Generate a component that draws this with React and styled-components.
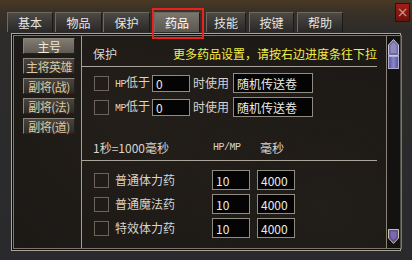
import styled, { createGlobalStyle } from "styled-components";

const Global = createGlobalStyle`
  body {
    margin: 0;
    background: #000;
  }
`;

const cjk = `"Noto Sans CJK SC", "Noto Sans", sans-serif`;

const tabs = [
  { label: "基本", w: 46, gap: 0 },
  { label: "物品", w: 47, gap: 2 },
  { label: "保护", w: 47, gap: 1 },
  { label: "药品", w: 46, gap: 4, active: true },
  { label: "技能", w: 40, gap: 6 },
  { label: "按键", w: 45, gap: 3 },
  { label: "帮助", w: 46, gap: 3 },
];

const heroes = ["主号", "主将英雄", "副将(战)", "副将(法)", "副将(道)"];

const potions = ["普通体力药", "普通魔法药", "特效体力药"];

const App = () => {
  return (
    <>
      <Global />
      <Window>
        <TabBar>
          {tabs.map((t) => (
            <Tab key={t.label} $w={t.w} $gap={t.gap} $active={t.active}>
              {t.label}
            </Tab>
          ))}
        </TabBar>
        <Close>×</Close>
        <Panel>
          <Inner>
            <Sidebar>
              {heroes.map((h, i) => (
                <SideBtn key={h} $active={i === 0}>
                  {h}
                </SideBtn>
              ))}
            </Sidebar>
            <Content>
              <Header>
                <Label $w={80}>保护</Label>
                <Hint>更多药品设置，请按右边进度条往下拉</Hint>
              </Header>
              <Section $top={6}>
                {["HP", "MP"].map((k) => (
                  <Row key={k}>
                    <Check />
                    <Label $w={37}>
                      <Latin>{k}</Latin>低于
                    </Label>
                    <Input $w={38} $h={17}>0</Input>
                    <Label $w={40} $pad={3}>时使用</Label>
                    <Input $w={80} $h={20}>随机传送卷</Input>
                  </Row>
                ))}
              </Section>
              <SubHeader>
                <Label $w={120}>1秒=1000毫秒</Label>
                <Latin $w={47}>HP/MP</Latin>
                <Label>毫秒</Label>
              </SubHeader>
              <Section $top={9}>
                {potions.map((p) => (
                  <Row key={p}>
                    <Check />
                    <Label $w={97}>{p}</Label>
                    <Input $w={38} $h={20}>10</Input>
                    <Input $w={38} $h={20} $gap={7}>4000</Input>
                  </Row>
                ))}
              </Section>
            </Content>
            <Scroll>
              <svg width="11" height="17" viewBox="0 0 11 17">
                <path d="M5.5 0.5 L10.5 6 L10.5 16.5 L0.5 16.5 L0.5 6 Z" fill="#6e6a9a" stroke="#c8c4e0" />
                <path d="M5.5 3 L8.5 6.5 L8.5 14 L2.5 14 L2.5 6.5 Z" fill="#8e8ac0" />
              </svg>
              <Thumb />
              <Spacer />
              <svg width="11" height="15" viewBox="0 0 11 15">
                <path d="M0.5 0.5 L10.5 0.5 L10.5 9 L5.5 14.5 L0.5 9 Z" fill="#5e4e8e" stroke="#c8c0a8" />
                <path d="M2.5 2.5 L8.5 2.5 L8.5 8 L5.5 11 L2.5 8 Z" fill="#7a68b0" />
              </svg>
            </Scroll>
          </Inner>
        </Panel>
      </Window>
    </>
  );
};

const Window = styled.div`
  position: relative;
  width: 412px;
  height: 260px;
  box-sizing: border-box;
  padding: 0 11px 9px 11px;
  display: flex;
  flex-direction: column;
  background:
    linear-gradient(180deg, #4a3a24 0px, #3c3226 9px, #2e2c2a 30px, #2a2a2e 100%);
  font-family: ${cjk};
  color: #d8d4cc;
`;

const TabBar = styled.div`
  height: 33px;
  margin-left: -4px;
  padding-bottom: 1px;
  box-sizing: border-box;
  display: flex;
  align-items: flex-end;
`;

const Tab = styled.div`
  position: relative;
  width: ${(p) => p.$w}px;
  margin-left: ${(p) => p.$gap}px;
  height: 20px;
  box-sizing: border-box;
  display: flex;
  align-items: center;
  justify-content: center;
  font-size: 12px;
  color: ${(p) => (p.$active ? "#ffffff" : "#e6e4e0")};
  background: ${(p) =>
    p.$active
      ? "linear-gradient(180deg, #7a766e, #5a5650)"
      : "linear-gradient(180deg, #4c4946, #2a2826)"};
  border: 1px solid #6e6a62;
  border-bottom: none;
  border-right-color: #1c1a18;

  ${(p) =>
    p.$active &&
    `
    &::after {
      content: "";
      position: absolute;
      top: -5px;
      left: -3px;
      right: -5px;
      bottom: -7px;
      border: 2px solid #e8231e;
    }
  `}
`;

const Close = styled.div`
  position: absolute;
  top: 3px;
  right: 2px;
  width: 15px;
  height: 19px;
  background: linear-gradient(180deg, #a02018, #6a120e);
  border: 1px solid #3a0a08;
  box-sizing: border-box;
  color: #d89a90;
  font: 14px/17px "DejaVu Sans", sans-serif;
  text-align: center;
`;

const Panel = styled.div`
  flex: 1;
  display: flex;
  border: 1px solid #aaa49a;
  padding: 1px;
  background: #0c0b0a;
`;

const Inner = styled.div`
  flex: 1;
  display: flex;
  border: 1px solid #7c766c;
  background:
    radial-gradient(circle at 30% 40%, rgba(60, 50, 40, 0.25), transparent 60%),
    radial-gradient(circle at 80% 80%, rgba(50, 44, 38, 0.3), transparent 50%),
    #1b1815;
`;

const Sidebar = styled.div`
  width: 68px;
  border-right: 1px solid #a39d93;
  padding: 2px 0 0 9px;
  box-sizing: border-box;
  display: flex;
  flex-direction: column;
  gap: 4px;
`;

const SideBtn = styled.div`
  width: 52px;
  height: 16px;
  box-sizing: border-box;
  display: flex;
  align-items: center;
  justify-content: center;
  font-size: 12px;
  white-space: nowrap;
  letter-spacing: -0.5px;
  color: ${(p) => (p.$active ? "#f0e8d4" : "#dccaa0")};
  background: ${(p) =>
    p.$active
      ? "linear-gradient(180deg, #827c72, #5e5a52)"
      : "linear-gradient(180deg, #4a4540, #2e2b28)"};
  border: 1px solid #8a8478;
  border-right-color: #242220;
  border-bottom-color: #242220;
`;

const Content = styled.div`
  flex: 1;
  padding-right: 9px;
  display: flex;
  flex-direction: column;
`;

const Header = styled.div`
  height: 31px;
  box-sizing: border-box;
  padding: 6px 0 0 11px;
  display: flex;
  align-items: center;
  border-bottom: 1px solid #aaa49a;
`;

const SubHeader = styled.div`
  height: 44px;
  box-sizing: border-box;
  padding: 0 0 5px 11px;
  display: flex;
  align-items: flex-end;
  border-bottom: 1px solid #aaa49a;
`;

const Label = styled.span`
  width: ${(p) => (p.$w ? `${p.$w}px` : "auto")};
  padding-left: ${(p) => p.$pad || 0}px;
  flex-shrink: 0;
  font-size: 12px;
  line-height: 14px;
  white-space: nowrap;
`;

const Latin = styled.span`
  width: ${(p) => (p.$w ? `${p.$w}px` : "auto")};
  font-family: "Liberation Mono", monospace;
  font-size: 10px;
  line-height: 14px;
  letter-spacing: -0.5px;
`;

const Hint = styled.span`
  font-size: 12px;
  line-height: 14px;
  color: #f2ee48;
  white-space: nowrap;
`;

const Section = styled.div`
  padding: ${(p) => p.$top}px 0 0 12px;
  display: flex;
  flex-direction: column;
  gap: 4px;
`;

const Row = styled.div`
  height: 20px;
  display: flex;
  align-items: center;
`;

const Check = styled.div`
  width: 15px;
  height: 15px;
  margin-right: 6px;
  box-sizing: border-box;
  border: 1px solid #6c645a;
  flex-shrink: 0;
`;

const Input = styled.div`
  width: ${(p) => p.$w}px;
  height: ${(p) => p.$h}px;
  margin-left: ${(p) => p.$gap || 0}px;
  box-sizing: border-box;
  flex-shrink: 0;
  background: #050404;
  border: 1px solid #928c80;
  padding-left: 3px;
  display: flex;
  align-items: center;
  font-size: 12px;
  color: #ecebe6;
`;

const Scroll = styled.div`
  width: 15px;
  box-sizing: border-box;
  border-left: 1px solid #8a8478;
  border-right: 1px solid #4e4a44;
  padding: 3px 0 4px 1px;
  display: flex;
  flex-direction: column;
  background: #141210;
`;

const Thumb = styled.div`
  width: 11px;
  height: 13px;
  box-sizing: border-box;
  border: 1px solid #b0acd0;
  background: linear-gradient(90deg, #5a56a0, #8a86c8, #5a56a0);
`;

const Spacer = styled.div`
  flex: 1;
`;

export default App;
